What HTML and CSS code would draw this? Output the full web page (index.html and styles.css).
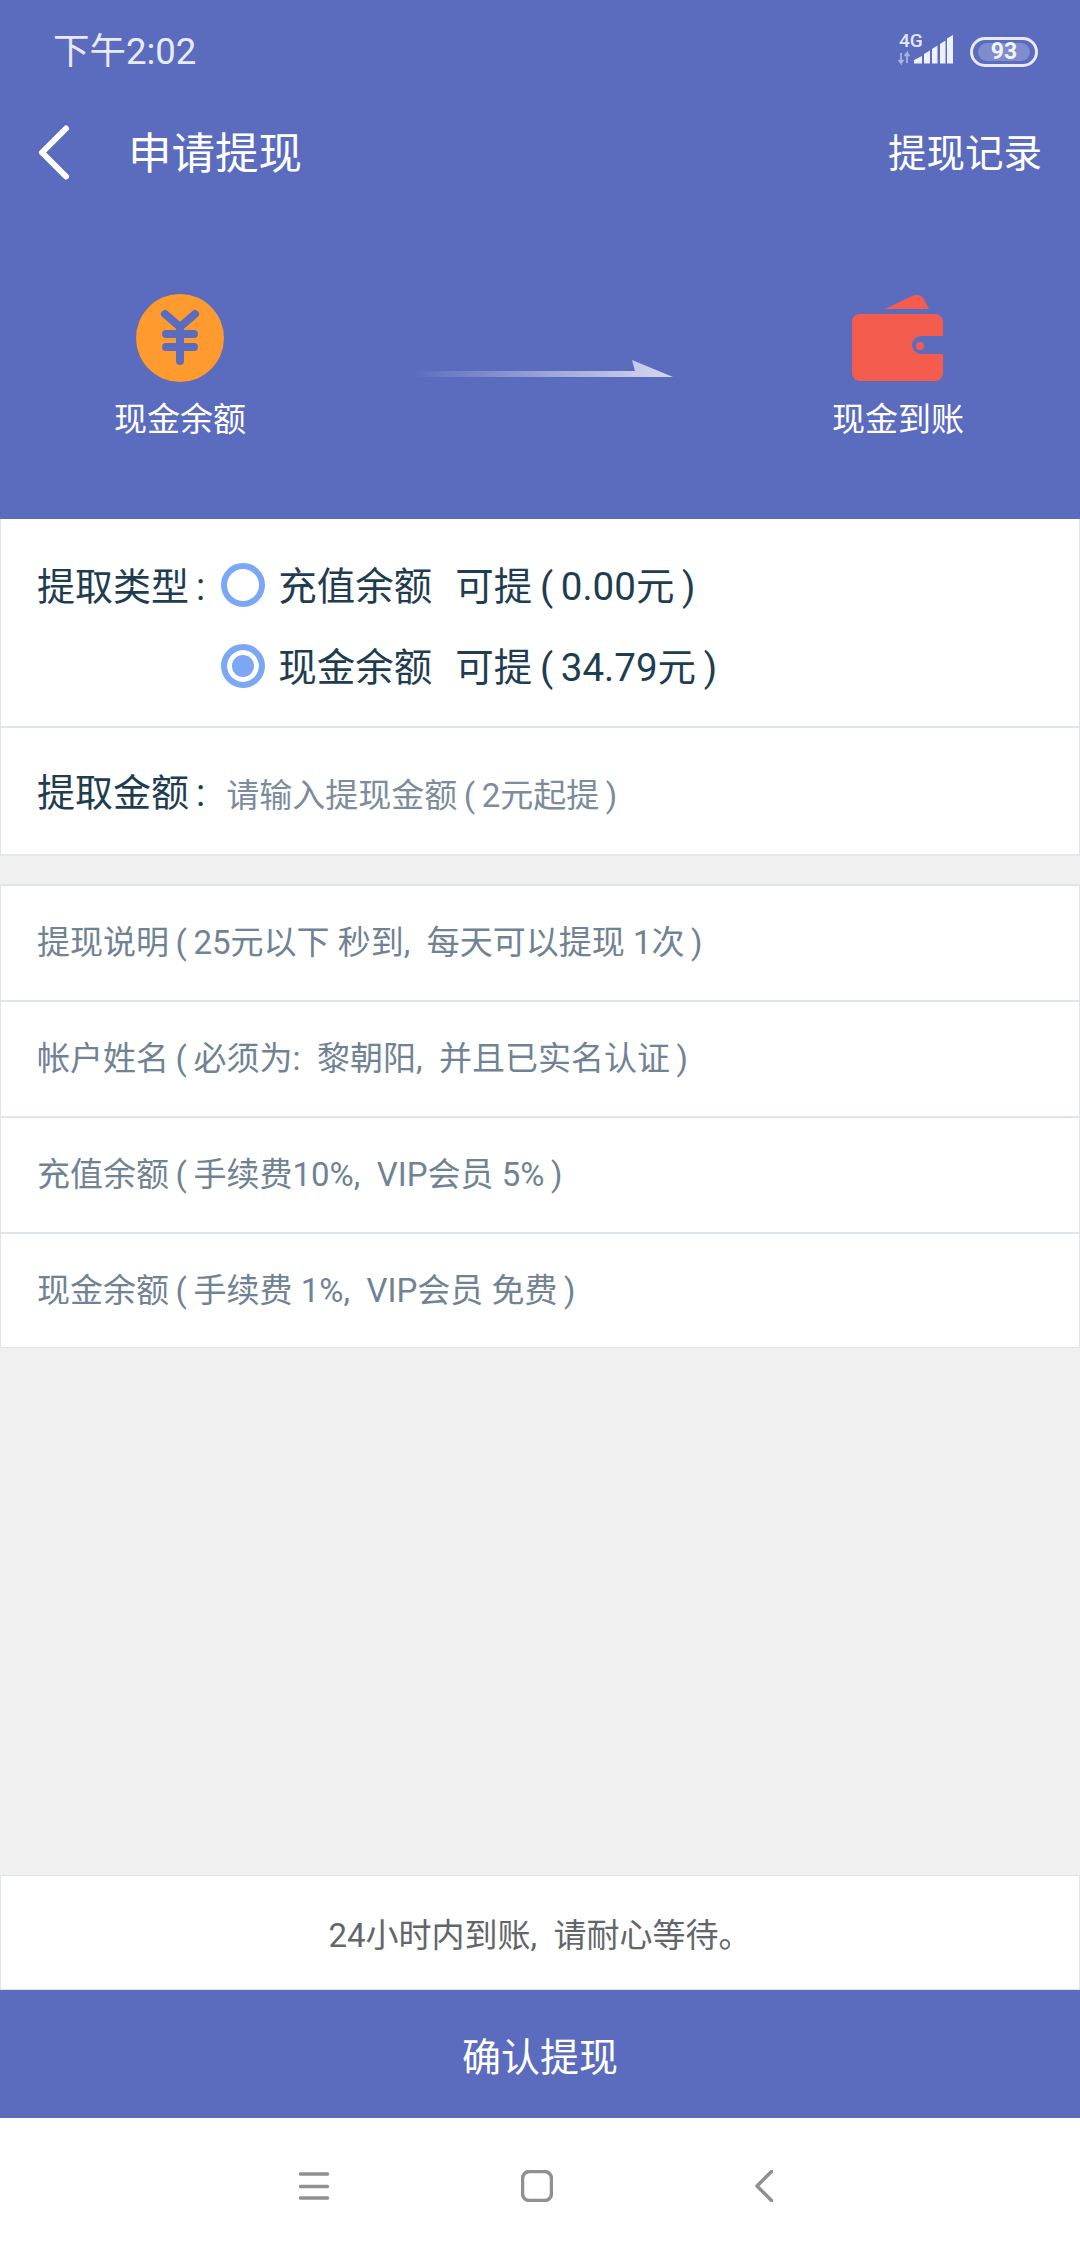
FILE: index.html
```html
<!DOCTYPE html>
<html lang="zh-CN">
<head>
<meta charset="utf-8">
<title>申请提现</title>
<link rel="stylesheet" href="styles.css">
</head>
<body>
<div class="page">
  <header class="hero">
    <div class="status">
      <span class="time">下午2:02</span>
      <div class="status-icons">
        <svg class="signal" width="58" height="46" viewBox="0 0 58 46">
          <text x="2" y="18" class="net">4G</text>
          <path d="M4 24v10l-2.500-3M4 34l2.500-3M10 34V24l-2.500 3M10 24l2.500 3" class="updown"/>
          <path d="M17 34.500v-3.500l8-4v7.500zM27 34.500V25l6-3.500v13zM35 34.500V20l5.500-3.500v18zM43 34.500V15l5.500-3.500v23zM50 34.500V9.500l6-3.500v28.500z" class="bars"/>
        </svg>
        <div class="battery"><span class="battery-level">93</span></div>
      </div>
    </div>
    <nav class="nav">
      <svg class="back" width="32" height="56" viewBox="0 0 32 56"><path d="M28 3.500 4 27.500l24 24"/></svg>
      <h1 class="title">申请提现</h1>
      <a class="records">提现记录</a>
    </nav>
    <div class="flow">
      <div class="flow-item">
        <svg width="88" height="88" viewBox="0 0 88 88">
          <circle cx="44" cy="44" r="44" fill="#ff9a2e"/>
          <path d="M29 20 44 33 59 20M30 40H58M30 53H58M44 33V67" class="yen"/>
        </svg>
        <span class="flow-label">现金余额</span>
      </div>
      <svg class="arrow" width="264" height="20" viewBox="0 0 264 20">
        <defs>
          <linearGradient id="fade" x1="0" x2="1" y1="0" y2="0">
            <stop offset="0" stop-color="#fff" stop-opacity="0"/>
            <stop offset="1" stop-color="#fff" stop-opacity=".75"/>
          </linearGradient>
        </defs>
        <path d="M0 11H224L221 0 262 17H0z" fill="url(#fade)"/>
      </svg>
      <div class="flow-item">
        <svg width="92" height="88" viewBox="0 0 92 88">
          <path d="M33 15 59 2.500c5-2.500 10-2 12.500 2L77 15z" fill="#f45d4e"/>
          <path d="M8 20H83a8 8 0 0 1 8 8V42H69a9 9 0 0 0 0 18H91V79a8 8 0 0 1-8 8H8a8 8 0 0 1-8-8V28a8 8 0 0 1 8-8z" fill="#f45d4e"/>
          <circle cx="68" cy="52" r="4" fill="#f45d4e"/>
        </svg>
        <span class="flow-label">现金到账</span>
      </div>
    </div>
  </header>

  <section class="form">
    <div class="form-row type-row">
      <span class="field-label type-label">提取类型<span class="colon">:</span></span>
      <div class="options">
        <label class="option"><span class="radio"></span><span class="opt-text">充值余额<span class="avail">可提<span class="lp">(</span>0.00元<span class="rp">)</span></span></span></label>
        <label class="option"><span class="radio radio-on"></span><span class="opt-text">现金余额<span class="avail">可提<span class="lp">(</span>34.79元<span class="rp">)</span></span></span></label>
      </div>
    </div>
    <div class="form-row amount-row">
      <span class="field-label">提取金额<span class="colon">:</span></span>
      <span class="placeholder">请输入提现金额<span class="lp">(</span>2元起提<span class="rp">)</span></span>
    </div>
  </section>

  <section class="notes">
    <div class="note"><span>提现说明<span class="lp">(</span>25元以下 秒到<span class="cm">,</span>每天可以提现 1次<span class="rp">)</span></span></div>
    <div class="note"><span>帐户姓名<span class="lp">(</span>必须为<span class="cm">:</span>黎朝阳<span class="cm">,</span>并且已实名认证<span class="rp">)</span></span></div>
    <div class="note"><span>充值余额<span class="lp">(</span>手续费10%<span class="cm">,</span>VIP会员 5%<span class="rp">)</span></span></div>
    <div class="note"><span>现金余额<span class="lp">(</span>手续费 1%<span class="cm">,</span>VIP会员 免费<span class="rp">)</span></span></div>
  </section>

  <div class="spacer"></div>

  <div class="notice"><span>24小时内到账<span class="cm">,</span>请耐心等待。</span></div>
  <button class="confirm">确认提现</button>

  <footer class="sysnav">
    <svg width="30" height="28" viewBox="0 0 30 28"><path d="M1.500 2H28.500M1.500 14.500H28.500M1.500 26H28.500" class="sys"/></svg>
    <svg width="32" height="32" viewBox="0 0 32 32"><rect x="1.500" y="1.500" width="29" height="29" rx="7" class="sys"/></svg>
    <svg class="sys-back" width="18" height="32" viewBox="0 0 18 32"><path d="M16.500 1.500 2 16l14.500 14.500" class="sys"/></svg>
  </footer>
</div>
</body>
</html>
```
FILE: styles.css
```css
* { box-sizing: border-box; }
html, body { margin: 0; padding: 0; }
body {
  font-family: Roboto, "Noto Sans CJK SC", sans-serif;
  background: #f0f0f0;
}
.page {
  width: 1080px;
  height: 2248px;
  display: flex;
  flex-direction: column;
  overflow: hidden;
}
.hero {
  height: 519px;
  background: #5b6cbf;
  color: #fff;
  flex: none;
}
.status {
  height: 104px;
  display: flex;
  justify-content: space-between;
  align-items: center;
  padding: 0 42px 0 53px;
}
.time { font-size: 36.500px; color: #e8eaf8; line-height: 1; }
.status-icons { display: flex; align-items: center; gap: 15px; }
.signal { overflow: visible; }
.net { font: 500 19px Roboto, sans-serif; fill: #e4e7f7; }
.updown { fill: none; stroke: #a9b3e2; stroke-width: 1.800; }
.bars { fill: #eef0fa; }
.battery {
  width: 68px;
  height: 30px;
  border: 3px solid #e8eaf8;
  border-radius: 15px;
  padding: 3px 5px;
  display: flex;
}
.battery-level {
  flex: 1;
  border-radius: 9px;
  background: rgba(255, 255, 255, .22);
  font: 700 23px/18px Roboto, sans-serif;
  color: #f2f3fb;
  text-align: center;
}
.nav {
  height: 98px;
  display: flex;
  align-items: center;
  padding: 0 38px;
}
.back { flex: none; }
.back path { fill: none; stroke: #fff; stroke-width: 6; stroke-linecap: round; stroke-linejoin: round; }
.title { font-size: 43.500px; font-weight: 400; margin: 4px 0 0 58px; flex: 1; line-height: 1; }
.records { font-size: 38.500px; line-height: 1; margin-top: 2px; }
.flow {
  display: flex;
  justify-content: space-between;
  align-items: flex-start;
  padding: 92px 116px 0 114px;
}
.flow-item { display: flex; flex-direction: column; align-items: center; gap: 18px; width: 132px; }
.flow-label { font-size: 33px; line-height: 40px; white-space: nowrap; }
.yen { fill: none; stroke: #5b6cbf; stroke-width: 8; stroke-linecap: round; stroke-linejoin: round; }
.arrow { margin: 66px 0 0 8px; flex: none; }
.form { background: #fff; flex: none; border-left: 1px solid #dfe6ea; border-right: 1px solid #dfe6ea; }
.form-row { display: flex; color: #1f3d50; font-size: 38px; }
.type-row { height: 209px; padding: 41px 0 0 36px; border-bottom: 2px solid #dfe6ea; }
.amount-row { height: 128px; padding: 4px 0 0 36px; align-items: center; border-bottom: 2px solid #e3e8eb; }
.field-label { line-height: 46px; white-space: nowrap; }
.type-label { margin-top: 4px; }
.colon { margin-left: 7px; }
.options { display: flex; flex-direction: column; gap: 32px; margin-left: 16px; }
.option { display: flex; align-items: center; gap: 13px; line-height: 44px; white-space: nowrap; font-size: 38.500px; }
.opt-text { margin-top: 5px; }
.avail { margin-left: 23px; }
.lp { margin: 0 .2em 0 .2em; }
.rp { margin-left: .2em; }
.cm { margin-right: .5em; }
.radio { width: 44px; height: 44px; border-radius: 50%; border: 6px solid #7ba7f5; background: #fff; flex: none; }
.radio-on { background: #7ba7f5; box-shadow: inset 0 0 0 5px #fff; }
.placeholder { font-size: 33px; color: #7b8c9c; margin-left: 21px; }
.notes { margin-top: 28px; background: #fff; border: 1px solid #dfe6ea; border-top-width: 2px; flex: none; }
.note {
  height: 116px;
  padding: 0 0 7px 36px;
  display: flex;
  align-items: center;
  font-size: 33px;
  color: #6f8394;
  border-bottom: 2px solid #dfe6ea;
}
.note:last-child { border-bottom: 0; height: 113px; padding-bottom: 6px; }
.spacer { flex: 1; }
.notice {
  height: 115px;
  background: #fff;
  border: 1px solid #dfe6ea;
  display: flex;
  align-items: center;
  justify-content: center;
  font-size: 33px;
  color: #62666b;
  flex: none;
}
.confirm {
  height: 128px;
  background: #5b6cbf;
  color: #fff;
  border: 0;
  font: inherit;
  font-size: 39px;
  flex: none;
}
.sysnav {
  height: 130px;
  background: #fff;
  display: flex;
  align-items: center;
  gap: 192px;
  padding: 6px 0 0 299px;
  flex: none;
}
.sys-back { margin-left: 10px; }
.sys { fill: none; stroke: #909090; stroke-width: 3.500; stroke-linecap: round; stroke-linejoin: round; }
```
